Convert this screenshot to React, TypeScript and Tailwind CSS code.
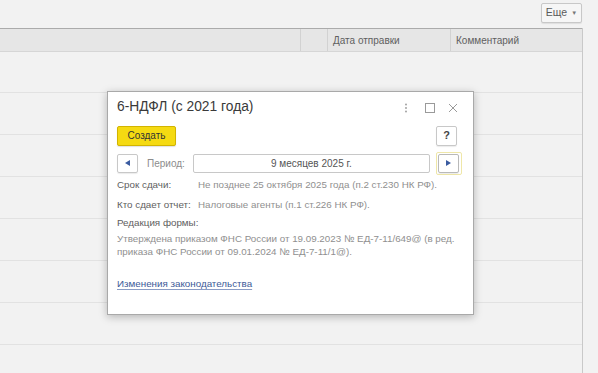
import React from "react";

export default function App() {
  const rows = [0, 1, 2, 3, 4, 5, 6];
  return (
    <div
      className="relative w-[598px] h-[373px] overflow-hidden bg-[#f2f2f2] text-[9.8px] text-[#4a4a4a]"
      style={{ fontFamily: '"Liberation Sans", Arial, sans-serif' }}
    >
      {/* top bar */}
      <div className="h-[28px] flex items-start justify-end pr-[16px] pt-[3px]">
        <div className="h-[20px] w-[41px] border border-[#c8c8c8] bg-[#f6f6f6] rounded-[2px] flex items-center justify-center gap-[4px] text-[#5a5a5a] text-[10.5px] shadow-[0_1px_1px_rgba(0,0,0,0.08)]">
          <span>Еще</span>
          <span className="text-[6px] text-[#777]">▼</span>
        </div>
      </div>
      {/* table */}
      <div className="w-[583px] border-r border-[#c9c9c9] h-[345px]">
        <div className="h-[24px] border-t border-[#ababab] border-b border-b-[#d6d6d6] bg-[#e6e6e6] flex text-[#606060] text-[10px]">
          <div className="w-[301px] border-r border-[#d2d2d2]" />
          <div className="w-[27px] border-r border-[#d2d2d2]" />
          <div className="w-[123px] border-r border-[#d2d2d2] pl-[5px] flex items-center">Дата отправки</div>
          <div className="flex-1 pl-[5px] flex items-center">Комментарий</div>
        </div>
        {rows.map((r) => (
          <div
            key={r}
            className={`${r === 0 ? "h-[41px]" : "h-[42px]"} border-b border-[#e2e2e2]`}
          />
        ))}
      </div>

      {/* dialog */}
      <div className="absolute left-[107px] top-[91px] w-[367px] h-[224px] bg-white border border-[#a9a9a9] shadow-[0_2px_8px_rgba(0,0,0,0.25)] flex flex-col px-[9px] whitespace-nowrap">
        <div className="h-[30px] flex items-center">
          <span className="text-[13.8px] text-[#3a3a3a] mt-[1px]">6-НДФЛ (с 2021 года)</span>
          <div className="flex-1" />
          <svg width="4" height="10" viewBox="0 0 4 10" className="mr-[17px] mt-[2px]">
            <circle cx="2" cy="1.5" r="0.9" fill="#999" />
            <circle cx="2" cy="5" r="0.9" fill="#999" />
            <circle cx="2" cy="8.5" r="0.9" fill="#999" />
          </svg>
          <svg width="10" height="10" viewBox="0 0 10 10" className="mr-[13px] mt-[2px]">
            <rect x="0.5" y="0.5" width="9" height="9" fill="none" stroke="#9a9a9a" strokeWidth="1" />
          </svg>
          <svg width="10" height="10" viewBox="0 0 10 10" className="mr-[6px] mt-[2px]">
            <path d="M1 1 L9 9 M9 1 L1 9" stroke="#9a9a9a" strokeWidth="1" />
          </svg>
        </div>
        <div className="h-[21px] mt-[3px] flex items-center">
          <div className="h-[20px] w-[59px] bg-[#f5da12] border border-[#d2b400] rounded-[2px] flex items-center justify-center text-[#333] text-[10px] shadow-[0_1px_1px_rgba(0,0,0,0.12)]">
            Создать
          </div>
          <div className="flex-1" />
          <div className="h-[20px] w-[21px] mr-[7px] border border-[#c8c8c8] rounded-[2px] flex items-center justify-center text-[#444] text-[11px] font-bold shadow-[0_1px_1px_rgba(0,0,0,0.08)]">
            ?
          </div>
        </div>
        <div className="h-[22px] mt-[6px] flex items-center">
          <div className="h-[19px] w-[21px] border border-[#c8c8c8] rounded-[2px] flex items-center justify-center shadow-[0_1px_1px_rgba(0,0,0,0.08)]">
            <svg width="5" height="6" viewBox="0 0 5 6"><path d="M5 0 L0 3 L5 6 Z" fill="#3a5ba0" /></svg>
          </div>
          <span className="ml-[9px] text-[#8c8c8c] text-[10px]">Период:</span>
          <div className="ml-[8px] h-[19px] w-[237px] border border-[#c8c8c8] rounded-[2px] flex items-center justify-center text-[#555] text-[10px]">
            9 месяцев 2025 г.
          </div>
          <div className="ml-[6px] h-[23px] w-[26px] border border-[#efe7a8] rounded-[2px] flex items-center justify-center">
            <div className="h-[19px] w-[21px] border border-[#b9b9b9] rounded-[2px] flex items-center justify-center shadow-[0_1px_1px_rgba(0,0,0,0.08)]">
              <svg width="5" height="6" viewBox="0 0 5 6"><path d="M0 0 L5 3 L0 6 Z" fill="#3a5ba0" /></svg>
            </div>
          </div>
        </div>
        <div className="mt-[1px] flex h-[20px] items-center">
          <span className="w-[81px] shrink-0 text-[#5e5e5e]">Срок сдачи:</span>
          <span className="text-[#8f8f8f]">Не позднее 25 октября 2025 года (п.2 ст.230 НК РФ).</span>
        </div>
        <div className="flex h-[20px] items-center">
          <span className="w-[81px] shrink-0 text-[#5e5e5e]">Кто сдает отчет:</span>
          <span className="text-[#8f8f8f]">Налоговые агенты (п.1 ст.226 НК РФ).</span>
        </div>
        <div className="h-[17px] flex items-center text-[#5e5e5e]">Редакция формы:</div>
        <div className="text-[#8f8f8f] leading-[13px]">
          Утверждена приказом ФНС России от 19.09.2023 № ЕД-7-11/649@ (в ред.
          <br />
          приказа ФНС России от 09.01.2024 № ЕД-7-11/1@).
        </div>
        <div className="mt-[19px] text-[#3d5a98] underline underline-offset-2 decoration-[#8a9cc5]">
          Изменения законодательства
        </div>
      </div>
    </div>
  );
}
